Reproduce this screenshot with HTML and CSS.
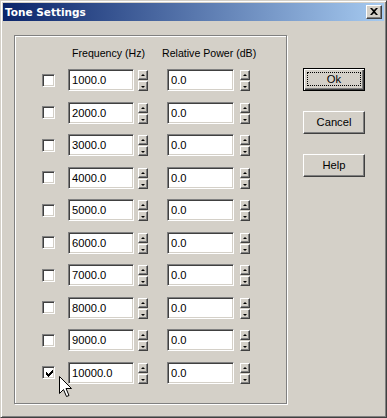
FILE: index.html
```html
<!DOCTYPE html>
<html>
<head>
<meta charset="utf-8">
<link rel="stylesheet" href="styles.css">
</head>
<body>
<div class="window">
  <div class="titlebar">
    <span class="title">Tone Settings</span>
    <span class="close"><svg width="8" height="7" viewBox="0 0 8 7"><path d="M0 0h2l2 2 2-2h2L5 3.5 8 7H6L4 5 2 7H0l3-3.5z" fill="#000"/></svg></span>
  </div>
  <div class="client">
    <div class="group">
      <div class="head">
        <span class="h1">Frequency (Hz)</span>
        <span class="h2">Relative Power (dB)</span>
      </div>
      <div class="rows">
        <div class="row"><span class="check"></span><span class="edit e1">1000.0</span><span class="spin s1"><span class="up"></span><span class="dn"></span></span><span class="edit e2">0.0</span><span class="spin s2"><span class="up"></span><span class="dn"></span></span></div>
        <div class="row"><span class="check"></span><span class="edit e1">2000.0</span><span class="spin s1"><span class="up"></span><span class="dn"></span></span><span class="edit e2">0.0</span><span class="spin s2"><span class="up"></span><span class="dn"></span></span></div>
        <div class="row"><span class="check"></span><span class="edit e1">3000.0</span><span class="spin s1"><span class="up"></span><span class="dn"></span></span><span class="edit e2">0.0</span><span class="spin s2"><span class="up"></span><span class="dn"></span></span></div>
        <div class="row"><span class="check"></span><span class="edit e1">4000.0</span><span class="spin s1"><span class="up"></span><span class="dn"></span></span><span class="edit e2">0.0</span><span class="spin s2"><span class="up"></span><span class="dn"></span></span></div>
        <div class="row"><span class="check"></span><span class="edit e1">5000.0</span><span class="spin s1"><span class="up"></span><span class="dn"></span></span><span class="edit e2">0.0</span><span class="spin s2"><span class="up"></span><span class="dn"></span></span></div>
        <div class="row"><span class="check"></span><span class="edit e1">6000.0</span><span class="spin s1"><span class="up"></span><span class="dn"></span></span><span class="edit e2">0.0</span><span class="spin s2"><span class="up"></span><span class="dn"></span></span></div>
        <div class="row"><span class="check"></span><span class="edit e1">7000.0</span><span class="spin s1"><span class="up"></span><span class="dn"></span></span><span class="edit e2">0.0</span><span class="spin s2"><span class="up"></span><span class="dn"></span></span></div>
        <div class="row"><span class="check"></span><span class="edit e1">8000.0</span><span class="spin s1"><span class="up"></span><span class="dn"></span></span><span class="edit e2">0.0</span><span class="spin s2"><span class="up"></span><span class="dn"></span></span></div>
        <div class="row"><span class="check"></span><span class="edit e1">9000.0</span><span class="spin s1"><span class="up"></span><span class="dn"></span></span><span class="edit e2">0.0</span><span class="spin s2"><span class="up"></span><span class="dn"></span></span></div>
        <div class="row"><span class="check checked"><svg width="7" height="7" viewBox="0 0 7 7"><path d="M0 2h1v1h1v1h1V3h1V2h1V1h1V0h1v3H6v1H5v1H4v1H3v1H2V6H1V5H0z" fill="#000"/></svg></span><span class="edit e1">10000.0</span><span class="spin s1"><span class="up"></span><span class="dn"></span></span><span class="edit e2">0.0</span><span class="spin s2"><span class="up"></span><span class="dn"></span></span>
          <svg class="cursor" width="13" height="21" viewBox="0 0 13 21"><path d="M0.5 0.5V17.5L4.5 13.5L7.5 20.5L10 19.5L7 12.5H12.5Z" fill="#fff" stroke="#000" stroke-width="1"/></svg>
        </div>
      </div>
    </div>
    <div class="buttons">
      <div class="btn default"><span class="focus">Ok</span></div>
      <div class="btn">Cancel</div>
      <div class="btn">Help</div>
    </div>
  </div>
</div>
</body>
</html>
```
FILE: styles.css
```css
html, body {
  margin: 0;
  padding: 0;
  background: #d4d0c8;
}
.window {
  width: 387px;
  height: 418px;
  box-sizing: border-box;
  background: #d4d0c8;
  border-top: 1px solid #d4d0c8;
  border-left: 1px solid #d4d0c8;
  border-right: 1px solid #404040;
  border-bottom: 1px solid #404040;
  box-shadow: inset 1px 1px 0 #fff, inset -1px -1px 0 #808080;
  padding: 2px;
  font-family: "Liberation Sans", Arial, sans-serif;
  font-size: 10.6px;
  color: #000;
  position: relative;
}
.titlebar {
  height: 18px;
  background: linear-gradient(to right, #0a246a, #a6caf0);
  display: flex;
  align-items: center;
  justify-content: space-between;
  padding: 0 2px 0 2px;
}
.title {
  font-family: "DejaVu Sans", Verdana, sans-serif;
  font-weight: bold;
  font-size: 10.5px;
  color: #fff;
  letter-spacing: 0;
}
.close {
  width: 16px;
  height: 14px;
  box-sizing: border-box;
  background: #d4d0c8;
  border-top: 1px solid #fff;
  border-left: 1px solid #fff;
  border-right: 1px solid #404040;
  border-bottom: 1px solid #404040;
  box-shadow: inset -1px -1px 0 #808080;
  display: flex;
  align-items: center;
  justify-content: center;
}
.close svg { display: block; margin: 0 1px 1px 0; }
.client {
  display: flex;
  padding: 14px 0 0 11px;
}
.group {
  width: 244px;
  height: 367px;
  border: 1px solid #808080;
  box-shadow: 1px 1px 0 #fff, inset 1px 1px 0 #fff;
  padding: 0 0 0 27px;
  box-sizing: content-box;
}
.head {
  display: flex;
  height: 13px;
  margin-top: 11px;
  line-height: 13px;
}
.h1 { margin-left: 30px; width: 90px; }
.h2 { }
.rows {
  display: flex;
  flex-direction: column;
  gap: 10.5px;
  margin-top: 9px;
}
.row {
  display: flex;
  align-items: center;
  height: 22px;
  position: relative;
}
.check {
  width: 13px;
  height: 13px;
  box-sizing: border-box;
  background: #fff;
  border-top: 1px solid #808080;
  border-left: 1px solid #808080;
  border-right: 1px solid #fff;
  border-bottom: 1px solid #fff;
  box-shadow: inset 1px 1px 0 #404040, inset -1px -1px 0 #d4d0c8;
  display: flex;
  align-items: center;
  justify-content: center;
}
.check svg { display: block; margin: 1px 0 0 1px; }
.edit {
  height: 22px;
  box-sizing: border-box;
  background: #fff;
  border-top: 1px solid #808080;
  border-left: 1px solid #808080;
  border-right: 1px solid #fff;
  border-bottom: 1px solid #fff;
  box-shadow: inset 1px 1px 0 #404040, inset -1px -1px 0 #d4d0c8;
  padding: 4px 0 0 3px;
  font-size: 11.2px;
  line-height: 12px;
}
.e1 { width: 66px; margin-left: 13px; }
.e2 { width: 67px; margin-left: 19px; }
.spin {
  display: flex;
  flex-direction: column;
  gap: 1px;
  width: 10px;
  height: 21px;
  align-self: flex-start;
  margin-top: 1px;
}
.s1 { margin-left: 4px; }
.s2 { margin-left: 6px; }
.up, .dn {
  flex: 1;
  box-sizing: border-box;
  background: #d4d0c8;
  border-top: 1px solid #fff;
  border-left: 1px solid #fff;
  border-right: 1px solid #404040;
  border-bottom: 1px solid #404040;
  box-shadow: inset -1px -1px 0 #808080;
  position: relative;
}
.up::after, .dn::after {
  content: "";
  position: absolute;
  left: 2px;
  width: 0;
  height: 0;
  border-left: 2px solid transparent;
  border-right: 2px solid transparent;
}
.up::after { top: 3px; border-bottom: 2px solid #000; }
.dn::after { top: 4px; border-top: 2px solid #000; }
.cursor {
  position: absolute;
  left: 17px;
  top: 14px;
}
.buttons {
  display: flex;
  flex-direction: column;
  gap: 20px;
  margin: 33px 0 0 16px;
}
.btn {
  width: 62px;
  height: 23px;
  box-sizing: border-box;
  background: #d4d0c8;
  border-top: 1px solid #fff;
  border-left: 1px solid #fff;
  border-right: 1px solid #404040;
  border-bottom: 1px solid #404040;
  box-shadow: inset -1px -1px 0 #808080;
  display: flex;
  align-items: center;
  justify-content: center;
  font-size: 11.2px;
  padding-bottom: 1px;
}
.btn.default {
  border: 1px solid #000;
  box-shadow: inset 1px 1px 0 #fff, inset -1px -1px 0 #404040, inset -2px -2px 0 #808080;
  padding: 3px;
}
.focus {
  flex: 1;
  align-self: stretch;
  display: flex;
  align-items: center;
  justify-content: center;
  outline: 1px dotted #000;
  outline-offset: 0;
  margin: 1px 1px 2px 1px;
}
```
